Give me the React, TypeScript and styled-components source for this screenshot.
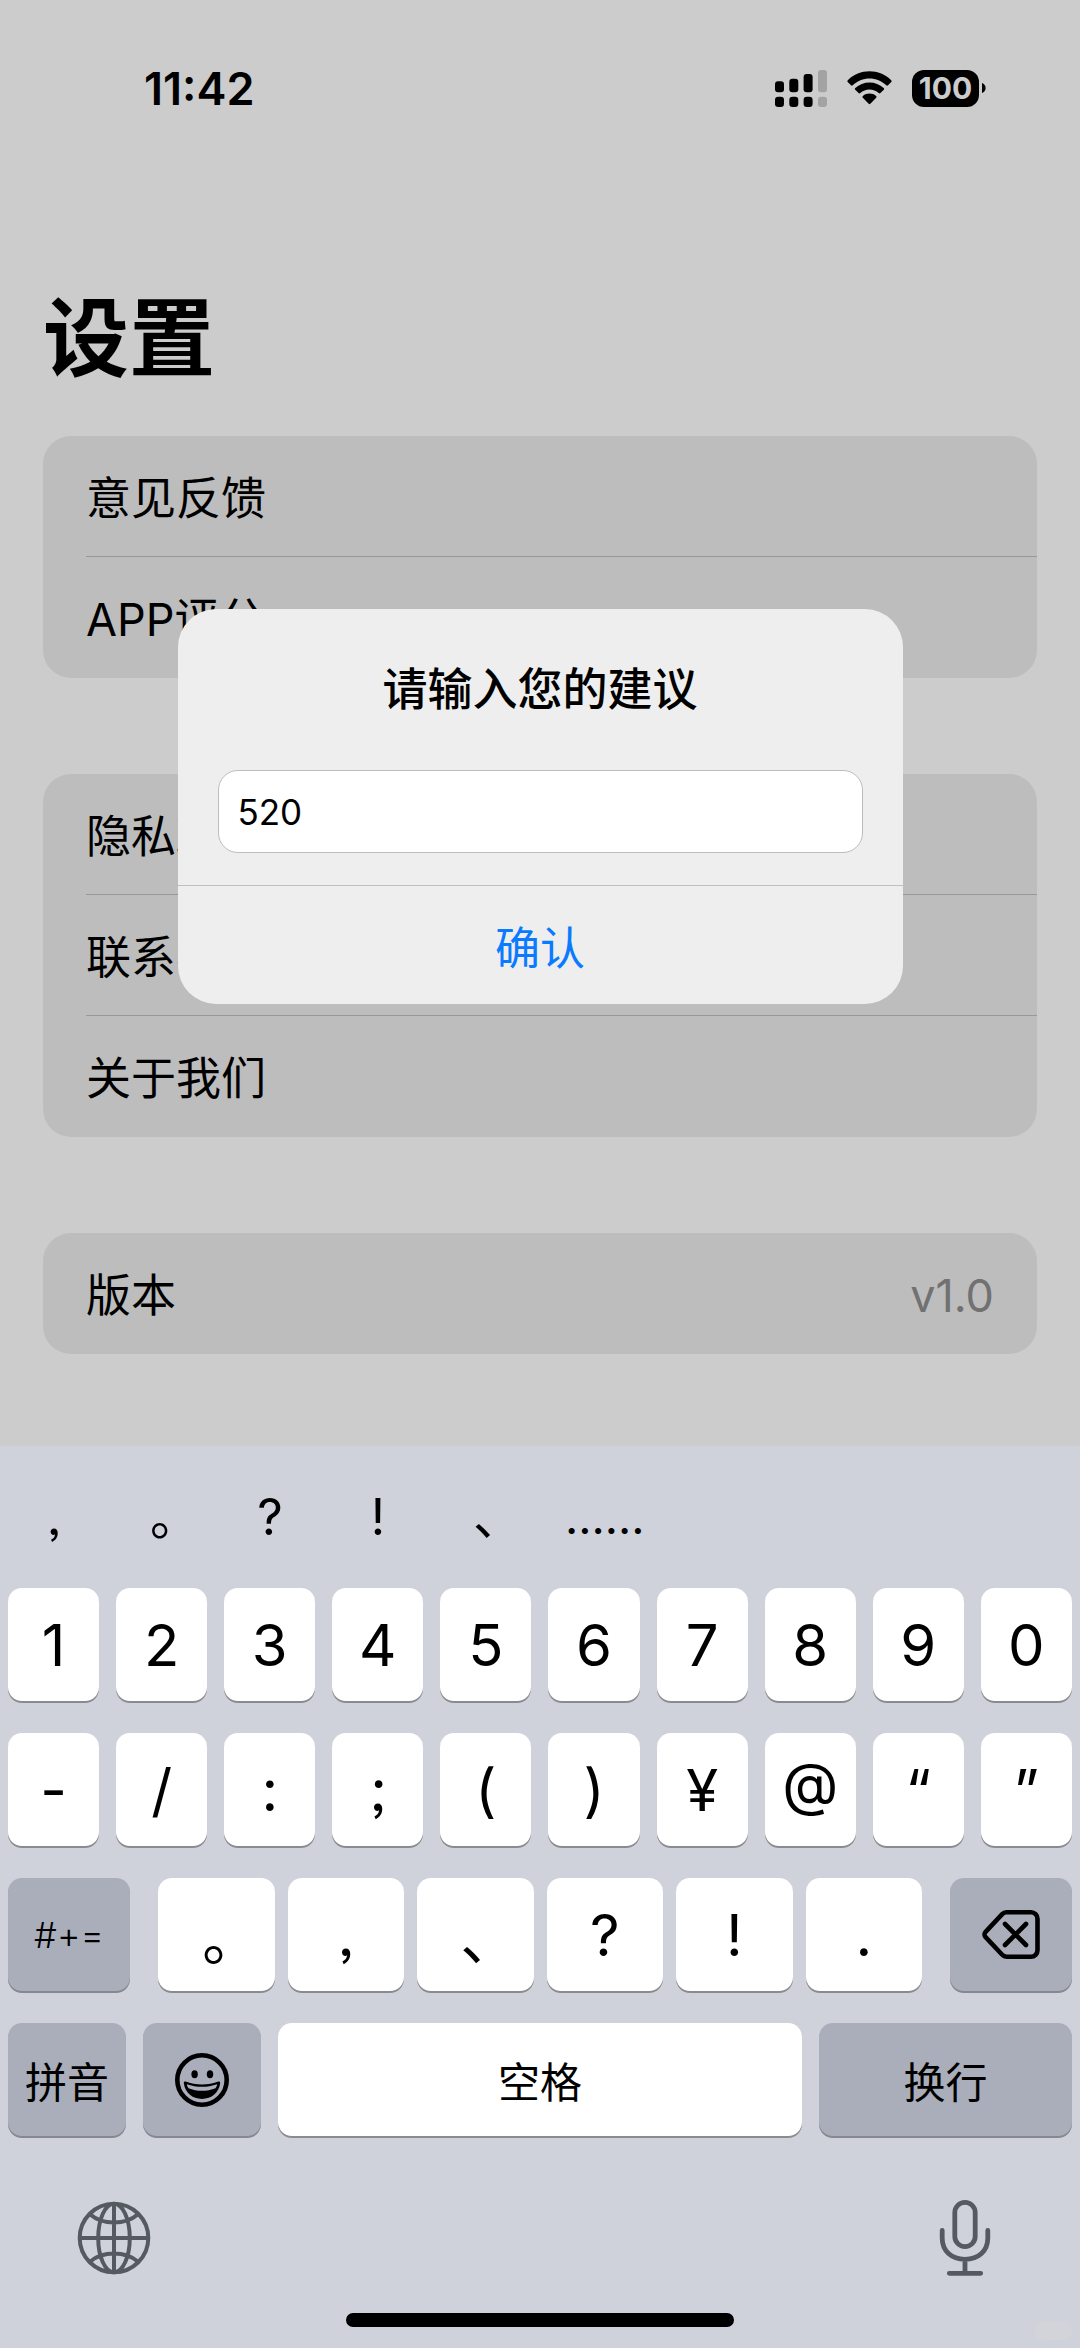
import React, { useState } from "react";
import styled, { createGlobalStyle } from "styled-components";

const GlobalStyle = createGlobalStyle`
  *, *::before, *::after { box-sizing: border-box; }
  html, body, #root { margin: 0; padding: 0; }
  body {
    background: #cccccc;
    color: #000;
    font-family: Inter, "Noto Sans CJK SC", "Liberation Sans", sans-serif;
  }
  button, input { font: inherit; color: inherit; margin: 0; }
  button { border: 0; background: none; padding: 0; cursor: pointer; }
  svg { display: block; }
`;

const Phone = styled.div`
  display: flex;
  flex-direction: column;
  min-height: 100vh;
`;

const Screen = styled.div`
  position: relative;
  flex: 1;
  background: #cccccc;
`;

const StatusBar = styled.header`
  display: flex;
  align-items: center;
  justify-content: space-between;
  height: 176px;
  padding: 0 94px 0 144px;
`;

const Clock = styled.time`
  font-size: 45px;
  font-weight: 600;
`;

const StatusIcons = styled.div`
  display: flex;
  align-items: center;
  gap: 20px;
`;

const Battery = styled.div`
  display: flex;
  align-items: center;
  gap: 3px;
`;

const BatteryLevel = styled.span`
  width: 67px;
  height: 37px;
  border-radius: 12px;
  background: #000;
  color: #cccccc;
  font-size: 30px;
  line-height: 37px;
  font-weight: 700;
  text-align: center;
`;

const Settings = styled.main`
  padding: 113px 43px 92px;
`;

const Heading = styled.h1`
  margin: 0 0 47px;
  font-size: 86px;
  line-height: 100px;
  font-weight: 700;
`;

const Groups = styled.div`
  display: flex;
  flex-direction: column;
  gap: 96px;
`;

const Card = styled.ul`
  margin: 0;
  padding: 0 0 0 43px;
  list-style: none;
  background: #bdbdbd;
  border-radius: 28px;
`;

const Item = styled.li`
  display: flex;
  align-items: center;
  justify-content: space-between;
  height: 121px;
  padding: 5px 43px 0 0;
  font-size: 45px;
  line-height: 60px;

  &:not(:last-child) {
    border-bottom: 1px solid #989898;
  }
`;

const ItemButton = styled.button`
  flex: 1;
  text-align: left;
`;

const ItemValue = styled.span`
  color: #717171;
`;

const DialogLayer = styled.div`
  position: absolute;
  inset: 0;
  display: flex;
  align-items: center;
  justify-content: center;
  padding: 167px 43px 0;
`;

const Dialog = styled.form`
  flex: 0 1 725px;
  background: #eeeeee;
  border-radius: 38px;
  overflow: hidden;
`;

const DialogBody = styled.div`
  display: flex;
  flex-direction: column;
  gap: 50px;
  padding: 51px 40px 32px;
`;

const DialogTitle = styled.label`
  font-size: 45px;
  line-height: 60px;
  font-weight: 500;
  text-align: center;
`;

const DialogInput = styled.input`
  width: 100%;
  height: 83px;
  padding: 0 19px;
  border: 1px solid #bcbcbc;
  border-radius: 20px;
  background: #fff;
  font-size: 35px;
  outline: none;
`;

const DialogAction = styled.button`
  width: 100%;
  height: 119px;
  border-top: 1px solid #bfbfbf;
  color: #0a7aff;
  font-size: 45px;
`;

const Keyboard = styled.section`
  display: flex;
  flex-direction: column;
  background: #cfd2da;
`;

const Candidates = styled.div`
  display: flex;
  height: 142px;
`;

const Candidate = styled.button<{ $wide?: boolean }>`
  flex: 0 0 ${(p) => (p.$wide ? "12%" : "10%")};
  font-size: ${(p) => (p.$wide ? 46 : 50)}px;
  line-height: 60px;
  font-feature-settings: "palt", "ss03";
`;

const Keys = styled.div`
  display: flex;
  flex-direction: column;
  gap: 32px;
  padding: 0 8px;
`;

const KeyRow = styled.div<{ $gap?: number }>`
  display: flex;
  gap: ${(p) => p.$gap ?? 17}px;
`;

const MarkKeys = styled.div`
  display: flex;
  flex: 1;
  gap: 13px;
  min-width: 0;
`;

const Key = styled.button<{
  $tone?: "light" | "dark";
  $width?: number;
  $text?: "word" | "mode";
  $features?: string;
}>`
  display: flex;
  align-items: center;
  justify-content: center;
  flex: ${(p) => (p.$width ? `0 0 ${p.$width}px` : "1 1 0")};
  min-width: 0;
  height: 113px;
  border-radius: 14px;
  background: ${(p) => (p.$tone === "dark" ? "#a9aeba" : "#ffffff")};
  box-shadow: 0 2px 0 ${(p) => (p.$tone === "dark" ? "#85888f" : "#8a8b8e")};
  font-size: ${(p) => (p.$text === "word" ? 42 : p.$text === "mode" ? 36 : 58)}px;
  font-weight: ${(p) => (p.$text === "mode" ? 300 : 400)};
  font-feature-settings: ${(p) => p.$features ?? "normal"};
`;

const Toolbar = styled.div`
  display: flex;
  align-items: center;
  justify-content: space-between;
  margin-top: 64px;
  padding: 0 89px 0 77px;
  color: #555a61;
`;

const HomeArea = styled.footer`
  position: relative;
  display: flex;
  justify-content: center;
  padding: 37px 0 21px;
`;

const HomeBar = styled.div`
  width: 36%;
  height: 14px;
  border-radius: 7px;
  background: #000;
`;

const CornerBadge = styled.div`
  position: absolute;
  right: 8px;
  bottom: 8px;
  width: 38px;
  height: 18px;
  border-radius: 9px;
  background: #d2d4d9;
`;

const SignalIcon = () => (
  <svg width="52" height="37" viewBox="0 0 52 37" aria-hidden="true">
    <rect x="0" y="11.3" width="9" height="11" rx="3" />
    <rect x="14.3" y="8.7" width="9" height="13.6" rx="3" />
    <rect x="28.6" y="4" width="9" height="18.3" rx="3" />
    <rect x="0" y="26.7" width="9" height="10.3" rx="3.2" />
    <rect x="14.3" y="26.7" width="9" height="10.3" rx="3.2" />
    <rect x="28.6" y="26.7" width="9" height="10.3" rx="3.2" />
    <g fill="#a3a3a3">
      <rect x="43" y="0" width="9" height="22.3" rx="3" />
      <rect x="43" y="26.7" width="9" height="10.3" rx="3.2" />
    </g>
  </svg>
);

const WifiIcon = () => (
  <svg width="45" height="34" viewBox="0 0 45 34" aria-hidden="true">
    <path d="M0.8 9.2C6.8 3.4 14.4 0.3 22.5 0.3S38.2 3.4 44.2 9.2c.6.6.6 1.2.1 1.8l-3.3 3.3c-.5.5-1.1.5-1.7 0C34.7 9.9 28.8 7.5 22.5 7.5S10.3 9.9 5.7 14.3c-.6.5-1.2.5-1.7 0L.7 11c-.5-.6-.5-1.2.1-1.8z" />
    <path d="M8.3 17C12.2 13.4 17.2 11.4 22.5 11.4S32.8 13.4 36.700 17c.6.6.6 1.2.1 1.8l-3.4 3.3c-.5.5-1.1.5-1.7 0-2.5-2.3-5.7-3.5-9.2-3.5s-6.7 1.2-9.2 3.5c-.6.5-1.2.5-1.7 0l-3.4-3.3c-.5-.6-.5-1.2.1-1.8z" />
    <path d="M15.9 25c3.7-3.2 9.5-3.2 13.2 0 .6.6.6 1.2.1 1.7l-5.9 6.1c-.5.5-1.1.5-1.6 0l-5.9-6.1c-.5-.5-.5-1.1.1-1.7z" />
  </svg>
);

const BatteryNub = () => (
  <svg width="4" height="10" viewBox="0 0 4 10" aria-hidden="true">
    <path d="M0 0c2.3.8 3.6 2.7 3.6 5S2.3 9.2 0 10z" />
  </svg>
);

const DeleteIcon = () => (
  <svg width="58" height="49" viewBox="0 0 58 49" fill="none" stroke="currentColor" strokeWidth="4.6" strokeLinecap="round" strokeLinejoin="round" aria-hidden="true">
    <path d="M24.5 2.3H49a6.500 6.500 0 0 1 6.500 6.500v31.400a6.500 6.500 0 0 1-6.500 6.500H24.500a6 6 0 0 1-4.300-1.900L3.600 27.200a3.900 3.900 0 0 1 0-5.400L20.200 4.200a6 6 0 0 1 4.300-1.900z" />
    <path d="M23 14l21 21M44 14L23 35" />
  </svg>
);

const EmojiIcon = () => (
  <svg width="54" height="54" viewBox="0 0 54 54" aria-hidden="true">
    <circle cx="27" cy="27" r="24.7" fill="none" stroke="#000" strokeWidth="4.6" />
    <ellipse cx="19.6" cy="21.3" rx="3.2" ry="4" />
    <ellipse cx="35" cy="21.3" rx="3.2" ry="4" />
    <path d="M10.5 28.6c10.500 4 22.500 4 33 0 1.200-.3 1.800.4 1.700 1.500C44.100 39.600 36.600 46 27 46S9.900 39.600 8.800 30.100c-.1-1.100.5-1.800 1.700-1.500z" />
    <path fill="#a9aeba" d="M11.700 31.300c10 3.400 20.600 3.400 30.600 0-.4 1.600-1 2.800-1.800 4-8.300 3.400-18.700 3.400-27 0-.8-1.200-1.400-2.400-1.800-4z" />
  </svg>
);

const GlobeIcon = () => (
  <svg width="74" height="74" viewBox="0 0 74 74" fill="none" stroke="currentColor" strokeWidth="4" aria-hidden="true">
    <circle cx="37" cy="37" r="34.3" />
    <ellipse cx="37" cy="37" rx="15.8" ry="34.3" />
    <path d="M37 2.700v68.600M2.700 37h68.600M13.300 13.500c6 5.200 14.500 8 23.700 8s17.700-2.800 23.700-8M13.300 60.500c6-5.200 14.500-8 23.700-8s17.700 2.800 23.700 8" />
  </svg>
);

const MicIcon = () => (
  <svg width="52" height="76" viewBox="0 0 52 76" fill="none" stroke="currentColor" strokeWidth="4.8" strokeLinecap="round" aria-hidden="true">
    <rect x="15.8" y="2.4" width="20.4" height="44.2" rx="10.2" />
    <path d="M3.200 30.500v7.500C3.200 51 12.500 59.300 26 59.300S48.800 51 48.800 38v-7.500M26 59.500V73M10.300 73.300h31.400" />
  </svg>
);

const ROUND = '"palt", "ss03"';
const RAISED = '"case"';

const candidates = [",", "。", "?", "!", "、", "……"];
const digits = ["1", "2", "3", "4", "5", "6", "7", "8", "9", "0"];
const symbols = [
  { char: "-" },
  { char: "/" },
  { char: ":" },
  { char: ";", features: ROUND },
  { char: "(" },
  { char: ")" },
  { char: "¥" },
  { char: "@", features: RAISED },
  { char: "“" },
  { char: "”" },
];
const marks = ["。", ",", "、", "?", "!", "."];
const groups = [
  ["意见反馈", "APP评分"],
  ["隐私政策", "联系我们", "关于我们"],
];

export default function App() {
  const [text, setText] = useState("520");
  const type = (s: string) => () => setText((t) => t + s);

  return (
    <>
      <GlobalStyle />
      <Phone lang="zh-CN">
        <Screen>
          <StatusBar>
            <Clock>11:42</Clock>
            <StatusIcons>
              <SignalIcon />
              <WifiIcon />
              <Battery>
                <BatteryLevel>100</BatteryLevel>
                <BatteryNub />
              </Battery>
            </StatusIcons>
          </StatusBar>
          <Settings>
            <Heading>设置</Heading>
            <Groups>
              {groups.map((items) => (
                <Card key={items[0]}>
                  {items.map((label) => (
                    <Item key={label}>
                      <ItemButton type="button">{label}</ItemButton>
                    </Item>
                  ))}
                </Card>
              ))}
              <Card>
                <Item>
                  <span>版本</span>
                  <ItemValue>v1.0</ItemValue>
                </Item>
              </Card>
            </Groups>
          </Settings>
          <DialogLayer>
            <Dialog role="dialog" onSubmit={(e) => e.preventDefault()}>
              <DialogBody>
                <DialogTitle htmlFor="suggestion">请输入您的建议</DialogTitle>
                <DialogInput id="suggestion" type="text" value={text} onChange={(e) => setText(e.target.value)} />
              </DialogBody>
              <DialogAction type="submit">确认</DialogAction>
            </Dialog>
          </DialogLayer>
        </Screen>

        <Keyboard>
          <Candidates>
            {candidates.map((c) => (
              <Candidate key={c} type="button" $wide={c.length > 1} onClick={type(c)}>
                {c}
              </Candidate>
            ))}
          </Candidates>
          <Keys>
            <KeyRow>
              {digits.map((c) => (
                <Key key={c} type="button" onClick={type(c)}>{c}</Key>
              ))}
            </KeyRow>
            <KeyRow>
              {symbols.map((s) => (
                <Key key={s.char} type="button" $features={s.features} onClick={type(s.char)}>{s.char}</Key>
              ))}
            </KeyRow>
            <KeyRow $gap={28}>
              <Key type="button" $tone="dark" $width={122} $text="mode">#+=</Key>
              <MarkKeys>
                {marks.map((c) => (
                  <Key key={c} type="button" $features={ROUND} onClick={type(c)}>{c}</Key>
                ))}
              </MarkKeys>
              <Key type="button" $tone="dark" $width={122} aria-label="删除" onClick={() => setText((t) => t.slice(0, -1))}>
                <DeleteIcon />
              </Key>
            </KeyRow>
            <KeyRow>
              <Key type="button" $tone="dark" $width={118} $text="word">拼音</Key>
              <Key type="button" $tone="dark" $width={118} aria-label="表情">
                <EmojiIcon />
              </Key>
              <Key type="button" $text="word" onClick={type(" ")}>空格</Key>
              <Key type="button" $tone="dark" $width={253} $text="word">换行</Key>
            </KeyRow>
          </Keys>
          <Toolbar>
            <button type="button" aria-label="切换键盘"><GlobeIcon /></button>
            <button type="button" aria-label="听写"><MicIcon /></button>
          </Toolbar>
          <HomeArea>
            <HomeBar />
            <CornerBadge />
          </HomeArea>
        </Keyboard>
      </Phone>
    </>
  );
}
